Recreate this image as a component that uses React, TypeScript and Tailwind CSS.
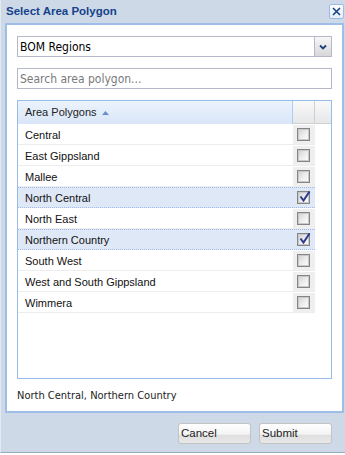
import React from "react";

const rows = [
  { name: "Central", checked: false },
  { name: "East Gippsland", checked: false },
  { name: "Mallee", checked: false },
  { name: "North Central", checked: true },
  { name: "North East", checked: false },
  { name: "Northern Country", checked: true },
  { name: "South West", checked: false },
  { name: "West and South Gippsland", checked: false },
  { name: "Wimmera", checked: false },
];

const tahoma = { fontFamily: "'DejaVu Sans Condensed', 'Liberation Sans', sans-serif" };
const arial = { fontFamily: "'Liberation Sans', Arial, sans-serif" };

function CheckBox({ checked }: { checked: boolean }) {
  return (
    <span className="relative block h-[13px] w-[13px] border border-[#858585] bg-gradient-to-br from-[#cfcfcf] via-[#ececec] to-white shadow-[inset_0_0_0_1px_#c9c9c9]">
      {checked ? (
        <svg width="14" height="14" viewBox="0 0 14 14" className="absolute left-[0px] top-[-2px]">
          <path d="M2.5 6.5 L5.5 10.5 L11.5 1.5" fill="none" stroke="#2c3a8e" strokeWidth="2" />
        </svg>
      ) : null}
    </span>
  );
}

function Button({ label }: { label: string }) {
  return (
    <button
      style={arial}
      className="h-[21px] w-[73px] rounded-[3px] border border-[#c3c3c3] bg-[linear-gradient(to_bottom,#ffffff_0%,#f3f3f3_55%,#dedede_56%,#e8e8e8_100%)] pl-[2px] text-left text-[11.5px] text-[#222]"
    >
      {label}
    </button>
  );
}

export default function App() {
  return (
    <div className="h-[455px] w-[345px] bg-white">
      <div className="flex h-[453px] flex-col border-b border-l border-[#9aabc0] border-l-[#e2e9f2] bg-[#ced9e7]">
        {/* title bar */}
        <div className="flex h-[23px] items-center justify-between pl-[5px] pr-[1px]">
          <span style={arial} className="text-[11.5px] font-bold text-[#15428b]">
            Select Area Polygon
          </span>
          <span className="flex h-[15px] w-[15px] items-center justify-center rounded-[2px] border border-[#99bbe8] bg-gradient-to-b from-white to-[#e4ecf7]">
            <svg width="9" height="9" viewBox="0 0 9 9">
              <path d="M1 1 L8 8 M8 1 L1 8" stroke="#15428b" strokeWidth="1.6" />
            </svg>
          </span>
        </div>

        {/* body */}
        <div className="ml-[4px] mr-[1px] flex h-[390px] flex-col border-2 border-[#9fbde9] bg-white px-[10px] pt-[11px]">
          <div className="flex h-[21px] border border-[#b5b8c8]">
            <div style={tahoma} className="flex flex-1 items-center pl-[2px] text-[12px] text-black">
              BOM Regions
            </div>
            <div className="flex w-[17px] items-center justify-center border-l border-[#b5b8c8] bg-gradient-to-b from-[#f7f7f7] to-[#d8d8d8]">
              <svg width="8" height="6" viewBox="0 0 8 6">
                <path d="M1 1.5 L4 4.5 L7 1.5" fill="none" stroke="#1d3f7c" strokeWidth="1.8" />
              </svg>
            </div>
          </div>

          <div className="mt-[11px] flex h-[21px] items-center border border-[#b5b8c8] pl-[2px]">
            <span style={tahoma} className="text-[12px] text-[#7a7a7a]">
              Search area polygon...
            </span>
          </div>

          {/* grid */}
          <div className="mt-[11px] flex h-[279px] flex-col border border-[#99bbe8]">
            <div className="flex h-[23px]">
              <div
                style={arial}
                className="flex w-[275px] items-center gap-[5px] border-r border-[#aaccf6] bg-gradient-to-b from-[#ebf3fd] to-[#d9e6f8] pl-[7px] text-[11px] text-[#222]"
              >
                Area Polygons
                <svg width="7" height="4" viewBox="0 0 7 4">
                  <path d="M0 4 L3.5 0 L7 4 Z" fill="#6d8fc6" />
                </svg>
              </div>
              <div className="w-[22px] border-b border-r border-[#d0d0d0] bg-gradient-to-b from-[#f9f9f9] to-[#e6e7e9]" />
              <div className="flex-1 border-b border-[#d0d0d0] bg-gradient-to-b from-[#f9f9f9] to-[#e6e7e9]" />
            </div>
            <div className="w-[297px]">
              {rows.map((row) => (
                <div
                  key={row.name}
                  className={
                    row.checked
                      ? "flex h-[21px] border-y border-dotted border-[#a3bae9] bg-[#dfe8f6]"
                      : "flex h-[21px] border-t border-b border-t-transparent border-b-[#ededed] bg-white"
                  }
                >
                  <div style={arial} className="flex flex-1 items-center pl-[7px] pt-[1px] text-[11px] text-[#111]">
                    {row.name}
                  </div>
                  <div
                    className={
                      row.checked
                        ? "flex w-[22px] items-center pl-[4px]"
                        : "flex w-[22px] items-center bg-[#efefef] pl-[4px]"
                    }
                  >
                    <CheckBox checked={row.checked} />
                  </div>
                </div>
              ))}
            </div>
          </div>

          <div className="flex flex-1 items-center pt-[3px]">
            <span style={tahoma} className="text-[11px] text-[#222]">
              North Central, Northern Country
            </span>
          </div>
        </div>

        {/* buttons */}
        <div className="flex justify-end gap-[8px] pr-[13px] pt-[10px]">
          <Button label="Cancel" />
          <Button label="Submit" />
        </div>
      </div>
    </div>
  );
}
